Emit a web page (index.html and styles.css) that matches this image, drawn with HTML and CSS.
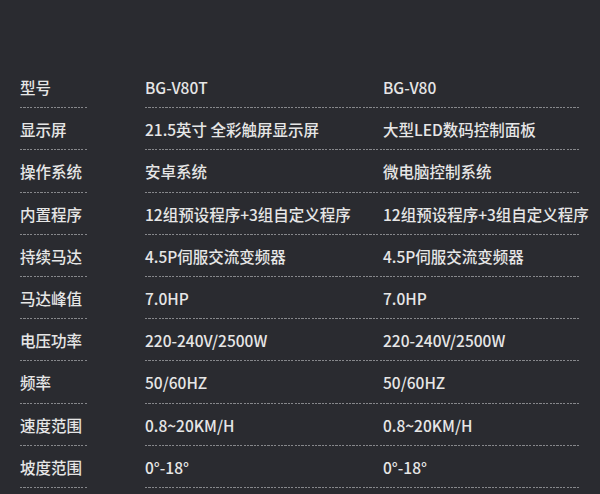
FILE: index.html
```html
<!DOCTYPE html>
<html lang="zh">
<head>
<meta charset="utf-8">
<link rel="stylesheet" href="styles.css">
</head>
<body>
<div class="spec">
  <div class="row"><div class="label">型号</div><div class="val">BG-V80T</div><div class="val">BG-V80</div></div>
  <div class="row"><div class="label">显示屏</div><div class="val">21.5英寸 全彩触屏显示屏</div><div class="val">大型LED数码控制面板</div></div>
  <div class="row"><div class="label">操作系统</div><div class="val">安卓系统</div><div class="val">微电脑控制系统</div></div>
  <div class="row"><div class="label">内置程序</div><div class="val">12组预设程序+3组自定义程序</div><div class="val">12组预设程序+3组自定义程序</div></div>
  <div class="row"><div class="label">持续马达</div><div class="val">4.5P伺服交流变频器</div><div class="val">4.5P伺服交流变频器</div></div>
  <div class="row"><div class="label">马达峰值</div><div class="val">7.0HP</div><div class="val">7.0HP</div></div>
  <div class="row"><div class="label">电压功率</div><div class="val">220-240V/2500W</div><div class="val">220-240V/2500W</div></div>
  <div class="row"><div class="label">频率</div><div class="val">50/60HZ</div><div class="val">50/60HZ</div></div>
  <div class="row"><div class="label">速度范围</div><div class="val">0.8~20KM/H</div><div class="val">0.8~20KM/H</div></div>
  <div class="row"><div class="label">坡度范围</div><div class="val">0°-18°</div><div class="val">0°-18°</div></div>
</div>
</body>
</html>
```
FILE: styles.css
```css
html, body {
  margin: 0;
  padding: 0;
  background: #2a2b30;
}
body {
  width: 600px;
  height: 494px;
  overflow: hidden;
  font-family: "Noto Sans CJK SC", "Noto Sans", sans-serif;
  color: #e6e6e6;
}
.spec {
  padding-top: 66px;
  padding-left: 20px;
}
.row {
  display: grid;
  grid-template-columns: 125px 238px 200px;
  height: 42.2px;
  align-items: center;
  position: relative;
  font-size: 15.5px;
  font-weight: 500;
  line-height: 20px;
}
.row::before,
.row::after {
  content: "";
  position: absolute;
  bottom: 0;
  height: 1px;
  background: repeating-linear-gradient(to right, #86878b 0 2.2px, transparent 2.2px 3.4px);
}
.row::before {
  left: 0;
  width: 68px;
}
.row::after {
  left: 125px;
  width: 434px;
}
.label, .val {
  white-space: nowrap;
}
```
